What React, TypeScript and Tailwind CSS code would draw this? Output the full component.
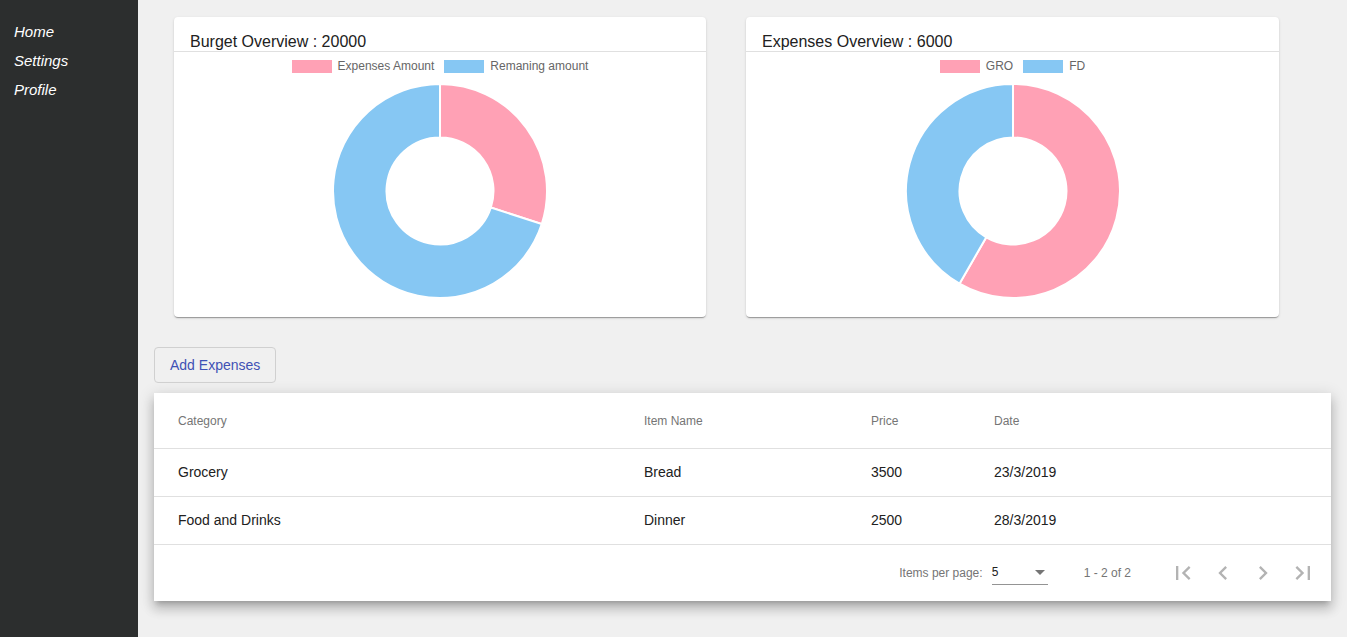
import React from 'react';

interface Slice {
  label: string;
  value: number;
  color: string;
}

const PINK = '#ffa1b5';
const BLUE = '#86c7f3';

const budgetSlices: Slice[] = [
  { label: 'Expenses Amount', value: 6000, color: PINK },
  { label: 'Remaning amount', value: 14000, color: BLUE },
];

const expenseSlices: Slice[] = [
  { label: 'GRO', value: 3500, color: PINK },
  { label: 'FD', value: 2500, color: BLUE },
];

const expenses = [
  { category: 'Grocery', item: 'Bread', price: 3500, date: '23/3/2019' },
  { category: 'Food and Drinks', item: 'Dinner', price: 2500, date: '28/3/2019' },
];

// arc path for a doughnut segment, angles in radians from 12 o'clock clockwise
const arcPath = (cx: number, cy: number, r: number, ir: number, a0: number, a1: number) => {
  const pt = (rad: number, a: number) => [cx + rad * Math.sin(a), cy - rad * Math.cos(a)];
  const large = a1 - a0 > Math.PI ? 1 : 0;
  const [x0, y0] = pt(r, a0);
  const [x1, y1] = pt(r, a1);
  const [x2, y2] = pt(ir, a1);
  const [x3, y3] = pt(ir, a0);
  return `M${x0} ${y0} A${r} ${r} 0 ${large} 1 ${x1} ${y1} L${x2} ${y2} A${ir} ${ir} 0 ${large} 0 ${x3} ${y3} Z`;
};

const Doughnut: React.FC<{ slices: Slice[] }> = ({ slices }) => {
  const total = slices.reduce((s, x) => s + x.value, 0);
  let start = 0;
  return (
    <svg width="216" height="216" viewBox="0 0 216 216">
      {slices.map((s) => {
        const end = start + (s.value / total) * Math.PI * 2;
        const d = arcPath(108, 108, 107, 53.5, start, end);
        start = end;
        return <path key={s.label} d={d} fill={s.color} stroke="#ffffff" strokeWidth="2" />;
      })}
    </svg>
  );
};

const ChartCard: React.FC<{ title: string; slices: Slice[]; width: string }> = ({ title, slices, width }) => (
  <div className={`${width} h-[300px] bg-white rounded-[4px] shadow-[0_2px_1px_-1px_rgba(0,0,0,0.2),0_1px_1px_0_rgba(0,0,0,0.14),0_1px_3px_0_rgba(0,0,0,0.12)] flex flex-col`}>
    <div className="pt-[16px] pl-4 text-[16px] leading-[18px] text-[#212121] border-b border-[#e0e0e0]">
      {title}
    </div>
    <div className="mt-[7px] h-[14px] flex justify-center items-center gap-[10px] text-[12px] text-[#666666]">
      {slices.map((s) => (
        <div key={s.label} className="flex items-center gap-[6px]">
          <span className="w-10 h-[13px]" style={{ backgroundColor: s.color }} />
          <span>{s.label}</span>
        </div>
      ))}
    </div>
    <div className="mt-[10px] flex justify-center">
      <Doughnut slices={slices} />
    </div>
  </div>
);

const PagerIcon: React.FC<{ d: string }> = ({ d }) => (
  <button className="w-10 h-10 flex items-center justify-center text-[#b3b3b3]">
    <svg width="28" height="28" viewBox="0 0 24 24" fill="currentColor">
      <path d={d} />
    </svg>
  </button>
);

export default function App() {
  return (
    <div className="flex h-[637px] w-full bg-[#f0f0f0] font-['Liberation_Sans',Arial,sans-serif] overflow-hidden">
      {/* Sidebar */}
      <nav className="w-[138px] shrink-0 bg-[#2c2e2e] pt-[17px] pl-[14px] flex flex-col">
        {['Home', 'Settings', 'Profile'].map((item) => (
          <a key={item} className="italic text-white text-[15px] leading-[29px]">
            {item}
          </a>
        ))}
      </nav>

      {/* Main */}
      <main className="flex-1 px-4 pt-[17px]">
        <div className="flex gap-10 pl-5">
          <ChartCard title="Burget Overview : 20000" slices={budgetSlices} width="w-[532px]" />
          <ChartCard title="Expenses Overview : 6000" slices={expenseSlices} width="w-[533px]" />
        </div>

        <button className="mt-[30px] h-9 px-[15px] border border-[#d0d0d0] rounded-[4px] text-[14px] text-[#3f51b5]">
          Add Expenses
        </button>

        <div className="mt-[10px] bg-white shadow-[0_5px_5px_-3px_rgba(0,0,0,0.2),0_8px_10px_1px_rgba(0,0,0,0.14),0_3px_14px_2px_rgba(0,0,0,0.12)]">
          <div className="grid grid-cols-[466px_227px_123px_1fr] pl-6 h-[56px] items-center border-b border-[#e0e0e0] text-[12px] text-[#757575]">
            <div>Category</div>
            <div>Item Name</div>
            <div>Price</div>
            <div>Date</div>
          </div>
          {expenses.map((e) => (
            <div key={e.item} className="grid grid-cols-[466px_227px_123px_1fr] pl-6 h-12 items-center border-b border-[#e0e0e0] text-[14px] text-[#212121]">
              <div>{e.category}</div>
              <div>{e.item}</div>
              <div>{e.price}</div>
              <div>{e.date}</div>
            </div>
          ))}

          {/* Paginator */}
          <div className="h-[56px] flex items-center justify-end pr-2 text-[12px] text-[#757575]">
            <span className="mr-[9px]">Items per page:</span>
            <div className="w-14 h-6 pt-[2px] flex items-start justify-between border-b border-[#949494]">
              <span className="leading-[18px] text-[#212121]">5</span>
              <span className="mt-[7px] mr-[3px] w-0 h-0 border-l-[5px] border-r-[5px] border-t-[5px] border-l-transparent border-r-transparent border-t-[#757575]" />
            </div>
            <span className="ml-9 mr-8">1 - 2 of 2</span>
            <PagerIcon d="M18.41 16.59L13.82 12l4.59-4.59L17 6l-6 6 6 6zM6 6h2v12H6z" />
            <PagerIcon d="M15.41 7.41L14 6l-6 6 6 6 1.41-1.41L10.83 12z" />
            <PagerIcon d="M10 6L8.59 7.41 13.17 12l-4.58 4.59L10 18l6-6z" />
            <PagerIcon d="M5.59 7.41L10.18 12l-4.59 4.59L7 18l6-6-6-6zM16 6h2v12h-2z" />
          </div>
        </div>
      </main>
    </div>
  );
}
